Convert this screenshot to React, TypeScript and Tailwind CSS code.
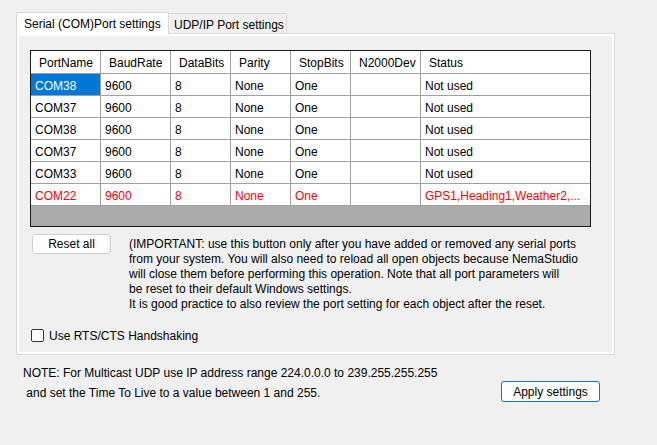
import React from 'react';

type Port = {
  name: string;
  baud: string;
  bits: string;
  parity: string;
  stop: string;
  dev: string;
  status: string;
  inUse?: boolean;
};

const ports: Port[] = [
  { name: 'COM38', baud: '9600', bits: '8', parity: 'None', stop: 'One', dev: '', status: 'Not used' },
  { name: 'COM37', baud: '9600', bits: '8', parity: 'None', stop: 'One', dev: '', status: 'Not used' },
  { name: 'COM38', baud: '9600', bits: '8', parity: 'None', stop: 'One', dev: '', status: 'Not used' },
  { name: 'COM37', baud: '9600', bits: '8', parity: 'None', stop: 'One', dev: '', status: 'Not used' },
  { name: 'COM33', baud: '9600', bits: '8', parity: 'None', stop: 'One', dev: '', status: 'Not used' },
  { name: 'COM22', baud: '9600', bits: '8', parity: 'None', stop: 'One', dev: '', status: 'GPS1,Heading1,Weather2,...', inUse: true },
];

const headers = ['PortName', 'BaudRate', 'DataBits', 'Parity', 'StopBits', 'N2000Dev', 'Status'];
const widths = ['w-[70px]', 'w-[70px]', 'w-[60px]', 'w-[60px]', 'w-[60px]', 'w-[70px]', 'flex-1'];

function PortGrid() {
  return (
    <div className="w-[561px] border border-[#1a1a1a] bg-[#ababab]">
      {/* header */}
      <div className="flex h-[23px] bg-white border-b border-[#a0a0a0]">
        {headers.map((h, i) => (
          <div
            key={h}
            className={`${widths[i]} flex items-center pl-[8px] pt-[2px] ${i < 6 ? 'border-r border-[#a0a0a0]' : ''}`}
          >
            {h}
          </div>
        ))}
      </div>
      {/* rows */}
      {ports.map((p, r) => {
        const cells = [p.name, p.baud, p.bits, p.parity, p.stop, p.dev, p.status];
        return (
          <div
            key={r}
            className={`flex h-[22px] bg-white border-b border-[#a0a0a0] ${p.inUse ? 'text-[#ff0000]' : ''}`}
          >
            {cells.map((c, i) => (
              <div
                key={i}
                className={`${widths[i]} flex items-center pl-[4px] pt-[2px] whitespace-nowrap overflow-hidden ${
                  i < 6 ? 'border-r border-[#a0a0a0]' : ''
                } ${r === 0 && i === 0 ? 'bg-[#0078d7] text-white' : ''}`}
              >
                {c}
              </div>
            ))}
          </div>
        );
      })}
      <div className="h-[20px]" />
    </div>
  );
}

export default function App() {
  return (
    <div
      className="w-[657px] h-[445px] bg-[#f0f0f0] text-[12px] text-black pl-[16px] pt-[12px]"
      style={{ fontFamily: '"Liberation Sans", Arial, sans-serif' }}
    >
      {/* Tabs */}
      <div className="flex items-end h-[21px]">
        <div className="relative z-10 -mb-px flex items-center h-[22px] w-[153px] pl-[7px] pt-[1px] bg-white border border-b-0 border-[#d9d9d9]">
          Serial (COM)Port settings
        </div>
        <div className="flex items-center h-[20px] w-[118px] pl-[5px] pt-[3px] bg-[#f0f0f0] border-t border-r border-[#d9d9d9]">
          UDP/IP Port settings
        </div>
      </div>

      {/* Tab page */}
      <div className="w-[599px] h-[322px] border border-[#d9d9d9] bg-white p-[2px]">
        <div className="h-full bg-[#f0f0f0] pl-[11px] pt-[14px]">
          <PortGrid />

          <div className="flex items-start mt-[7px]">
            <button className="ml-[2px] w-[79px] h-[20px] rounded-[3px] border border-[#cfcfcf] bg-[#fdfdfd] text-[12px]">
              Reset all
            </button>
            <div className="ml-[18px] pt-[3px] leading-[15px] whitespace-nowrap">
              (IMPORTANT: use this button only after you have added or removed any serial ports
              <br />
              from your system. You will also need to reload all open objects because NemaStudio
              <br />
              will close them before performing this operation. Note that all port parameters will
              <br />
              be reset to their default Windows settings.
              <br />
              It is good practice to also review the port setting for each object after the reset.
            </div>
          </div>

          <label className="flex items-center gap-[5px] mt-[17px] ml-[1px] h-[13px]">
            <span className="w-[13px] h-[13px] rounded-[2px] border border-[#333333] bg-white" />
            <span>Use RTS/CTS Handshaking</span>
          </label>
        </div>
      </div>

      {/* Note + apply */}
      <div className="flex w-[584px] mt-[8px]">
        <div className="ml-[7px] leading-[20px] whitespace-pre">
          {'NOTE: For Multicast UDP use IP address range 224.0.0.0 to 239.255.255.255\n and set the Time To Live to a value between 1 and 255.'}
        </div>
        <button className="ml-auto mt-[18px] w-[99px] h-[21px] rounded-[3px] border border-[#0078d7] bg-[#fdfdfd] text-[12px]">
          Apply settings
        </button>
      </div>
    </div>
  );
}
